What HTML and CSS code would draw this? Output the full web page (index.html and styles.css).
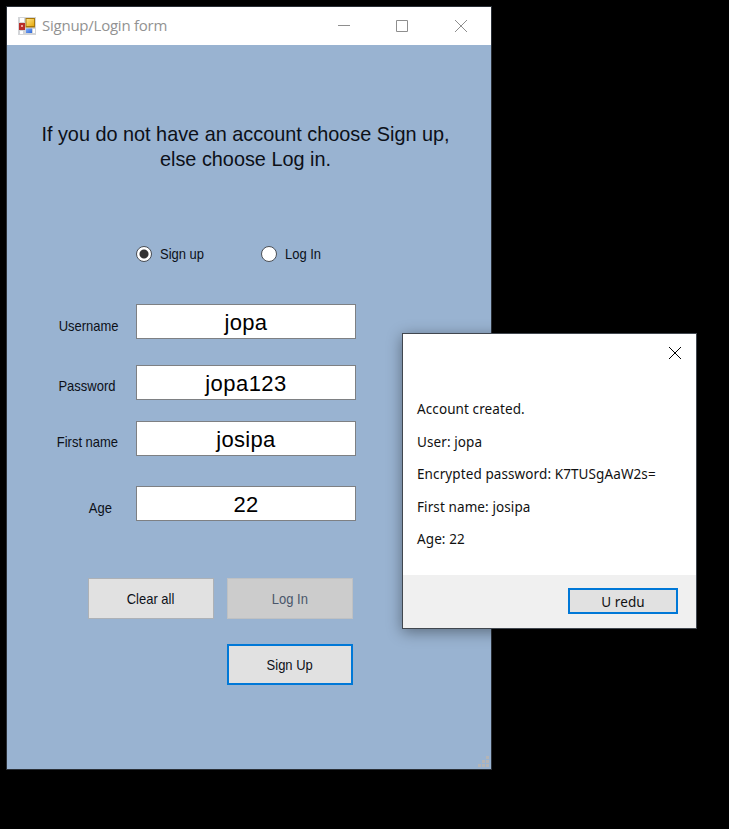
FILE: index.html
```html
<!DOCTYPE html>
<html lang="en">
<head>
<meta charset="utf-8">
<title>Signup/Login form</title>
<link rel="stylesheet" href="styles.css">
</head>
<body>
<main class="desktop">
  <section class="window">
    <header class="titlebar">
      <svg class="app-icon" width="18" height="18" viewBox="0 0 18 18">
        <defs>
          <linearGradient id="gold" x2="1" y2="1"><stop offset="0" stop-color="#ffe58a"/><stop offset="1" stop-color="#e6a90c"/></linearGradient>
          <linearGradient id="blue" x2="1" y2="1"><stop offset="0" stop-color="#86b0fa"/><stop offset="1" stop-color="#2e68d8"/></linearGradient>
        </defs>
        <path fill="#d3d5d8" d="M0 0h18v18H0z"/>
        <path fill="#fff" d="M2 1h4v4H2zM2 14h3v3H2zM15 12h2v4h-2z"/>
        <path fill="#b82d2a" d="M1 6h6v7H1z"/>
        <path fill="#f0a29c" d="M3 8h2v2H3z"/>
        <path fill="#a8780c" d="M7.500 1H17v9.500H7.500z"/>
        <path fill="url(#gold)" d="M8.500 2H16v7H8.500z"/>
        <path fill="url(#blue)" d="M8 11.500h6V16H8z"/>
      </svg>
      <h1 class="title">Signup/Login form</h1>
      <svg class="controls" width="132" height="14" viewBox="0 0 132 14" fill="none" stroke="#8e8e8e">
        <path d="M0 6.500h12M58.500 1.500h11v11h-11z"/>
        <path d="M117 1l12 12M129 1l-12 12"/>
      </svg>
    </header>
    <form class="form">
      <p class="intro">If you do not have an account choose Sign up,<br>else choose Log in.</p>
      <div class="modes">
        <span class="mode"><i class="radio checked"></i><span class="narrow">Sign up</span></span>
        <span class="mode"><i class="radio"></i><span class="narrow">Log In</span></span>
      </div>
      <div class="fields">
        <span class="label"><span class="narrow">Username</span></span><span class="input">jopa</span>
        <span class="label pass"><span class="narrow">Password</span></span><span class="input digits">jopa123</span>
        <span class="label first"><span class="narrow">First name</span></span><span class="input">josipa</span>
        <span class="label age"><span class="narrow">Age</span></span><span class="input">22</span>
      </div>
      <div class="buttons">
        <span class="button"><span class="narrow">Clear all</span></span>
        <span class="button disabled"><span class="narrow">Log In</span></span>
        <span class="button focused"><span class="narrow">Sign Up</span></span>
      </div>
    </form>
    <svg class="grip" width="11" height="11" viewBox="0 0 11 11"><path fill="#b5b5b6" d="M8 0h3v3H8zM4 4h3v3H4zM8 4h3v3H8zM0 8h3v3H0zM4 8h3v3H4zM8 8h3v3H8z"/></svg>
  </section>
  <section class="dialog">
    <header class="dialog-head">
      <svg width="12" height="12" viewBox="0 0 12 12" stroke="#000"><path d="M0 0l12 12M12 0L0 12"/></svg>
    </header>
    <div class="message">
      <p>Account created.</p>
      <p>User: jopa</p>
      <p>Encrypted password: K7TUSgAaW2s=</p>
      <p>First name: josipa</p>
      <p>Age: 22</p>
    </div>
    <footer class="dialog-foot"><span class="ok">U redu</span></footer>
  </section>
</main>
</body>
</html>
```
FILE: styles.css
```css
* { box-sizing: border-box; }
body { margin: 0; background: #000; }
p, h1 { margin: 0; font-weight: 400; }
svg { display: block; }
.desktop { position: relative; width: 729px; height: 829px; overflow: hidden; background: #000; }
.window {
  position: absolute; left: 6px; top: 6px; width: 486px; height: 764px;
  border: 1px solid #2a2f36; background: #99b3d1; color: #0c1018;
  font: 15px/18px "Liberation Sans", Arial, sans-serif;
}
.titlebar { display: flex; align-items: center; height: 38px; padding-left: 11px; background: #fff; color: #929292; }
.app-icon { margin-top: -1px; }
.title { margin-left: 6px; margin-top: -2px; width: 296px; font: 15px/20px "Open Sans", sans-serif; letter-spacing: -.24px; white-space: nowrap; }
.intro { padding-top: 76px; width: 477px; text-align: center; font-size: 21px; line-height: 25px; white-space: nowrap; transform: scaleX(.945); }
.modes { display: flex; margin: 73px 0 0 129px; }
.mode { display: flex; align-items: center; width: 125px; height: 20px; }
.mode .narrow { transform-origin: left; }
.narrow { display: inline-block; transform: scaleX(.865); }
.radio { width: 16px; height: 16px; margin-right: 8px; border: 1.5px solid #4b4f55; border-radius: 50%; background: #fff; }
.checked { background: radial-gradient(circle, #333 0 4px, #fff 5px); }
.fields { display: grid; grid-template-columns: 129px 220px; grid-template-rows: 61px 56px 65px 36px; margin-top: 40px; }
.label { padding: 13px 0 0 34px; text-align: center; white-space: nowrap; }
.pass { padding: 12px 0 0 31px; }
.first { padding: 12px 0 0 31px; }
.age { padding-left: 57px; }
.input { height: 35px; border: 1px solid #7e8083; background: #fff; color: #000; text-align: center; font-size: 22px; line-height: 36px; letter-spacing: .3px; }
.digits { letter-spacing: .45px; }
.buttons { display: grid; grid-template-columns: 126px 126px; grid-template-rows: 41px 41px; gap: 25px 13px; margin: 56px 0 0 81px; }
.button { display: flex; align-items: center; justify-content: center; padding-right: 1px; border: 1px solid #adb1b6; background: #e1e1e1; white-space: nowrap; }
.disabled { background: #ccc; border-color: #bfc1c3; color: #49566a; }
.focused { grid-column: 2; border: 2px solid #0078d7; }
.grip { position: absolute; right: 2px; bottom: 2px; }
.dialog {
  position: absolute; left: 402px; top: 333px; width: 295px; height: 296px;
  border: 1px solid #41474f; background: #fff; color: #111;
  box-shadow: 0 3px 14px rgba(0, 0, 0, .4);
  font: 13.5px/18px "Noto Sans", sans-serif; letter-spacing: .1px;
}
.dialog-head { display: flex; justify-content: flex-end; height: 59px; padding: 13px 15px 0 0; }
.message { display: grid; grid-auto-rows: 32.5px; height: 182px; padding: 7px 0 0 14px; white-space: nowrap; }
.dialog-foot { display: flex; justify-content: flex-end; height: 53px; padding: 13px 18px 0 0; background: #f0f0f0; }
.ok { display: flex; align-items: center; justify-content: center; width: 110px; height: 26px; padding-top: 2px; border: 2px solid #0078d7; background: #e1e1e1; }
```
